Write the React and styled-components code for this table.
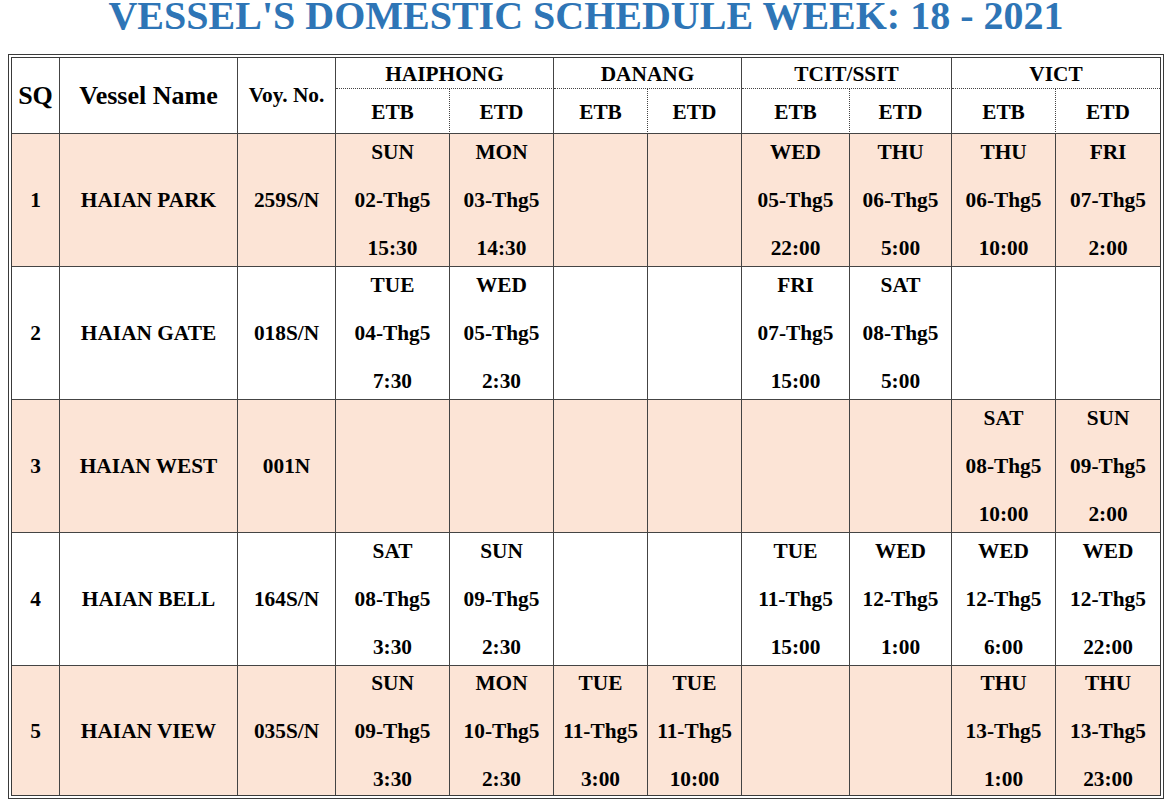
import React from "react";
import styled, { createGlobalStyle } from "styled-components";

const Global = createGlobalStyle`
  html, body { background: #fff; }
  body {
    margin: 0 8px;
    font-family: "Liberation Serif", "Times New Roman", serif;
    color: #000;
  }
`;

const Title = styled.h1`
  margin: 0 0 22px;
  height: 32px;
  line-height: 32px;
  text-align: center;
  font-size: 40px;
  font-weight: 700;
  color: #2e75b6;
  white-space: nowrap;
`;

const Table = styled.table`
  width: 100%;
  table-layout: fixed;
  border-collapse: separate;
  border-spacing: 0;
  border: 4px double #3a3a3a;
  font-weight: 700;
`;

const Col = styled.col`
  width: ${(p) => p.$w}px;
`;

const Cell = styled.td`
  padding: 0;
  text-align: center;
  vertical-align: middle;
  font-size: ${(p) => p.$size || 21.33}px;
  background: ${(p) => (p.$shade ? "#fce4d6" : "#fff")};
  border-right: ${(p) => (p.$last ? "none" : `1px ${p.$dotRight ? "dotted" : "solid"} #444`)};
  border-bottom: ${(p) => (p.$bottom ? "none" : `1px ${p.$dotBottom ? "dotted" : "solid"} #444`)};
  white-space: nowrap;
`;

const HeadBox = styled.div`
  height: ${(p) => p.$h}px;
  line-height: ${(p) => p.$h}px;
  padding-top: ${(p) => p.$shift || 0}px;
  box-sizing: border-box;
`;

const Stack = styled.div`
  height: ${(p) => p.$h}px;
  display: flex;
  flex-direction: column;
  justify-content: center;
  align-items: center;
`;

const Line = styled.div`
  line-height: 48px;
  flex: none;
`;

const stations = ["HAIPHONG", "DANANG", "TCIT/SSIT", "VICT"];

const rows = [
  {
    sq: 1, name: "HAIAN PARK", voy: "259S/N",
    cells: [
      ["SUN", "02-Thg5", "15:30"], ["MON", "03-Thg5", "14:30"],
      null, null,
      ["WED", "05-Thg5", "22:00"], ["THU", "06-Thg5", "5:00"],
      ["THU", "06-Thg5", "10:00"], ["FRI", "07-Thg5", "2:00"],
    ],
  },
  {
    sq: 2, name: "HAIAN GATE", voy: "018S/N",
    cells: [
      ["TUE", "04-Thg5", "7:30"], ["WED", "05-Thg5", "2:30"],
      null, null,
      ["FRI", "07-Thg5", "15:00"], ["SAT", "08-Thg5", "5:00"],
      null, null,
    ],
  },
  {
    sq: 3, name: "HAIAN WEST", voy: "001N",
    cells: [
      null, null, null, null, null, null,
      ["SAT", "08-Thg5", "10:00"], ["SUN", "09-Thg5", "2:00"],
    ],
  },
  {
    sq: 4, name: "HAIAN BELL", voy: "164S/N",
    cells: [
      ["SAT", "08-Thg5", "3:30"], ["SUN", "09-Thg5", "2:30"],
      null, null,
      ["TUE", "11-Thg5", "15:00"], ["WED", "12-Thg5", "1:00"],
      ["WED", "12-Thg5", "6:00"], ["WED", "12-Thg5", "22:00"],
    ],
  },
  {
    sq: 5, name: "HAIAN VIEW", voy: "035S/N",
    cells: [
      ["SUN", "09-Thg5", "3:30"], ["MON", "10-Thg5", "2:30"],
      ["TUE", "11-Thg5", "3:00"], ["TUE", "11-Thg5", "10:00"],
      null, null,
      ["THU", "13-Thg5", "1:00"], ["THU", "13-Thg5", "23:00"],
    ],
  },
];

const widths = [48, 178, 98, 114, 104, 94, 94, 108, 102, 104, 104];

export default function App() {
  return (
    <>
      <Global />
      <Title>VESSEL'S DOMESTIC SCHEDULE WEEK: 18 - 2021</Title>
      <Table>
        <colgroup>
          {widths.map((w, i) => (
            <Col key={i} $w={w} />
          ))}
        </colgroup>
        <thead>
          <tr>
            <Cell as="th" rowSpan={2} $size={26}>SQ</Cell>
            <Cell as="th" rowSpan={2} $size={26}>Vessel Name</Cell>
            <Cell as="th" rowSpan={2}>Voy. No.</Cell>
            {stations.map((s, i) => (
              <Cell as="th" key={s} colSpan={2} $dotBottom $last={i === 3}>
                <HeadBox $h={30} $shift={1}>{s}</HeadBox>
              </Cell>
            ))}
          </tr>
          <tr>
            {stations.map((s, i) => (
              <React.Fragment key={s}>
                <Cell as="th" $dotRight>
                  <HeadBox $h={44} $shift={1}>ETB</HeadBox>
                </Cell>
                <Cell as="th" $last={i === 3}>
                  <HeadBox $h={44} $shift={1}>ETD</HeadBox>
                </Cell>
              </React.Fragment>
            ))}
          </tr>
        </thead>
        <tbody>
          {rows.map((r, ri) => {
            const shade = ri % 2 === 0;
            const bottom = ri === rows.length - 1;
            const h = bottom ? 129 : 132;
            return (
              <tr key={r.sq}>
                <Cell $shade={shade} $bottom={bottom}>
                  <Stack $h={h}><Line>{r.sq}</Line></Stack>
                </Cell>
                <Cell $shade={shade} $bottom={bottom}>
                  <Stack $h={h}><Line>{r.name}</Line></Stack>
                </Cell>
                <Cell $shade={shade} $bottom={bottom}>
                  <Stack $h={h}><Line>{r.voy}</Line></Stack>
                </Cell>
                {r.cells.map((c, ci) => (
                  <Cell key={ci} $shade={shade} $bottom={bottom} $last={ci === 7}>
                    <Stack $h={h}>
                      {c && c.map((t) => <Line key={t}>{t}</Line>)}
                    </Stack>
                  </Cell>
                ))}
              </tr>
            );
          })}
        </tbody>
      </Table>
    </>
  );
}
